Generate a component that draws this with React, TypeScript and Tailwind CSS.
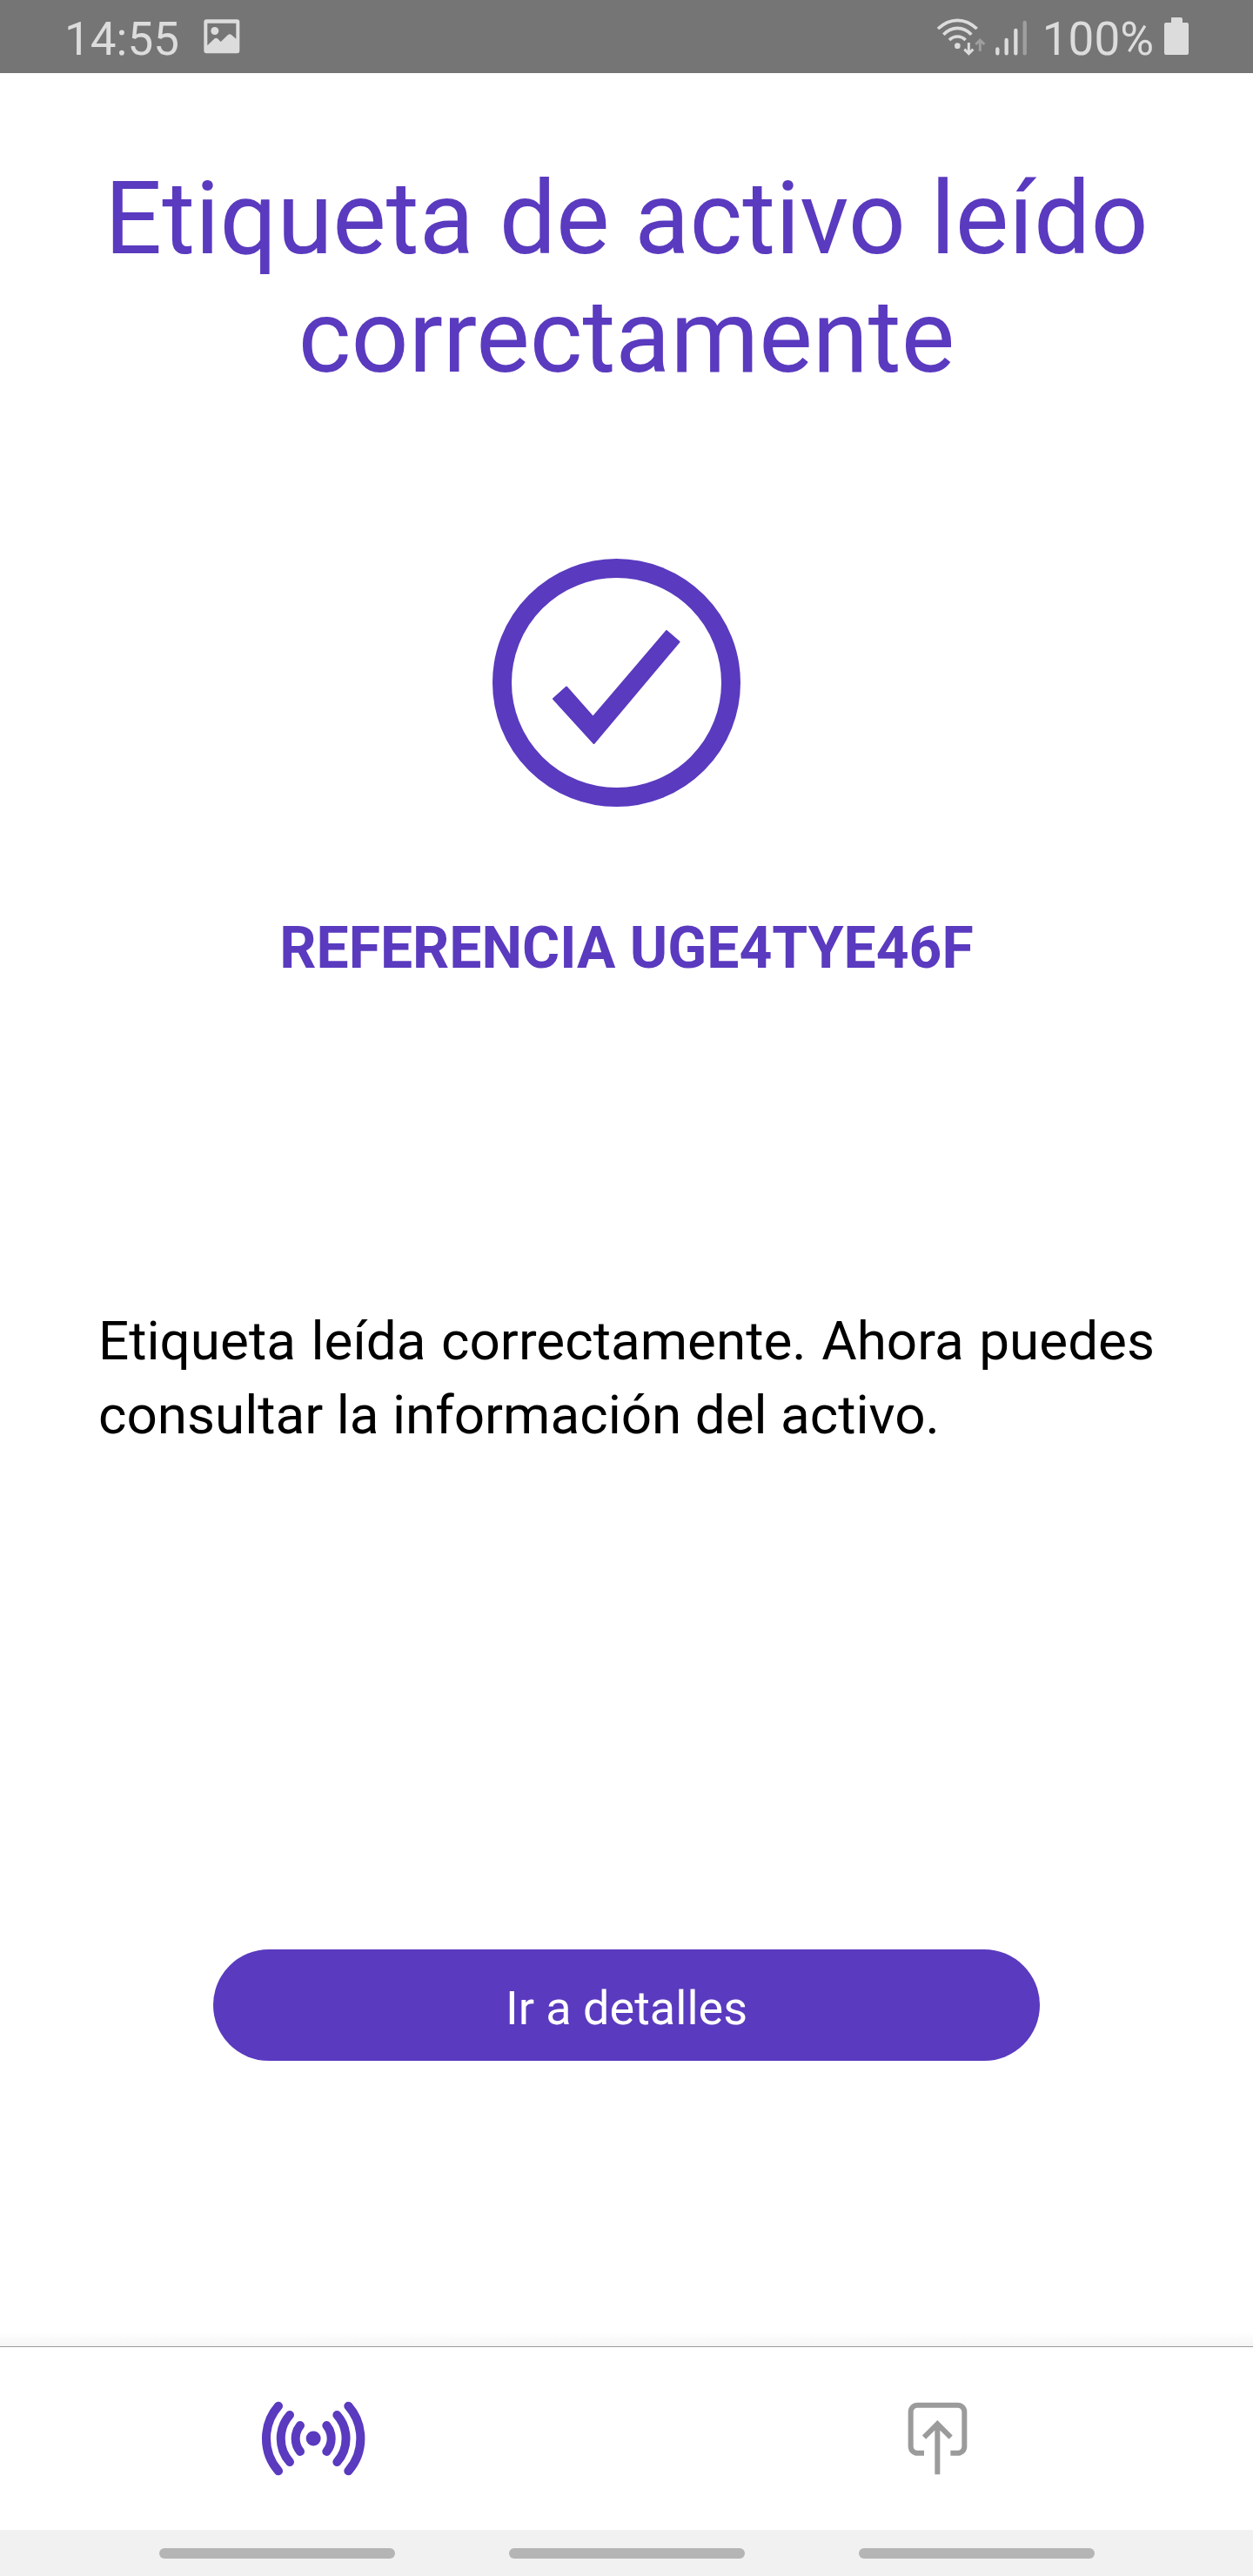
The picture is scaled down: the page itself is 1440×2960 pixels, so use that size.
import React from 'react';

function StatusBar() {
  return (
    <header className="flex h-[84px] items-center justify-between bg-[#757575] px-[74px] text-[53px] leading-[62px] text-[#dcdcdc]">
      <div className="flex items-center gap-7">
        <time className="pt-[5px]">14:55</time>
        <svg width="42" height="40" viewBox="581 69 126 120" fill="currentColor" aria-label="Imagen">
          <path
            fillRule="evenodd"
            d="M591 70h105a9 9 0 0 1 9 9v99a9 9 0 0 1-9 9H591a9 9 0 0 1-9-9V79a9 9 0 0 1 9-9zM594 83v77l25-24q5-4 10 0l11 11 25-24q6-5 12 0l16 14V83z"
          />
          <circle cx="619.500" cy="109.500" r="13.500" />
        </svg>
      </div>
      <div className="flex items-center">
        <svg width="105" height="45" viewBox="105 60 315 135" fill="none" stroke="currentColor" aria-label="Wi-Fi y cobertura">
          <g strokeWidth="11">
            <path d="M111 99Q142 70 178 70T245 99" />
            <path d="M130 119Q151 97 178 97T226 119" />
            <path d="M150 138Q162 126 178 126T206 138" />
          </g>
          <circle cx="178" cy="158" r="10" fill="currentColor" stroke="none" />
          <path d="M217 147v38M202 170l15 15 15-15" strokeWidth="9" />
          <path d="M256 176v-38M241 153l15-15 15 15" strokeWidth="9" stroke="#9f9f9f" />
          <g strokeWidth="13" strokeLinecap="round">
            <path d="M316 169v15M347 138v46M379 105v79" />
            <path d="M410 78v106" stroke="#9f9f9f" />
          </g>
        </svg>
        <span className="ml-[17px] pt-[5px]">100%</span>
        <svg className="ml-3" width="28" height="44" viewBox="0 0 28 44" fill="currentColor" aria-label="Batería">
          <path d="M9 0h10a2 2 0 0 1 2 2v4h5a2 2 0 0 1 2 2v33a2 2 0 0 1-2 2H2a2 2 0 0 1-2-2V8a2 2 0 0 1 2-2h6V1a1 1 0 0 1 1-1z" />
        </svg>
      </div>
    </header>
  );
}

function CheckIcon() {
  return (
    <svg className="mt-[187px] mr-[22px]" width="286" height="286" viewBox="0 0 286 286" aria-hidden="true">
      <circle cx="142.500" cy="142.500" r="131.500" fill="none" stroke="currentColor" strokeWidth="22" />
      <path
        d="M70 161l15-13.500L115.500 182 200 83l14.500 12.500L116.500 212z"
        fill="currentColor"
        stroke="currentColor"
        strokeWidth="2"
        strokeLinejoin="round"
      />
    </svg>
  );
}

function AntennaIcon() {
  return (
    <svg width="120" height="86" viewBox="61 238 360 258" fill="none" stroke="currentColor" strokeWidth="30" strokeLinecap="round" aria-hidden="true">
      <path d="M121 255A170 170 0 0 0 121 479M160 286A122 122 0 0 0 160 448M196 322A71 71 0 0 0 196 412" />
      <path d="M362 255A170 170 0 0 1 362 479M323 286A122 122 0 0 1 323 448M287 322A71 71 0 0 1 287 412" />
      <circle cx="241.500" cy="367" r="25.500" fill="currentColor" stroke="none" />
    </svg>
  );
}

function UploadIcon() {
  return (
    <svg width="75" height="84" viewBox="98 116 225 252" fill="none" stroke="currentColor" strokeWidth="18" aria-hidden="true">
      <path d="M155 292.500H132a23 23 0 0 1-23-23V150a23 23 0 0 1 23-23h139a23 23 0 0 1 23 23v119.500a23 23 0 0 1-23 23h-25" />
      <path d="M201 366V192M155 238l46-46 46 46" />
    </svg>
  );
}

export default function App() {
  return (
    <div className="flex min-h-screen flex-col bg-white font-['Roboto',sans-serif]">
      <StatusBar />
      <main className="flex flex-1 flex-col items-center px-[113px] text-[#5a3abf]">
        <h1 className="mt-[99px] text-center text-[116px] leading-[136px]">Etiqueta de activo leído correctamente</h1>
        <CheckIcon />
        <p className="mt-[120px] text-[66px] leading-[84px] font-bold">REFERENCIA UGE4TYE46F</p>
        <p className="mt-[366px] w-full text-justify text-[62px] leading-[85px] text-black">
          Etiqueta leída correctamente. Ahora puedes consultar la información del activo.
        </p>
        <button type="button" className="mt-[572px] h-[128px] w-full max-w-[950px] rounded-full bg-[#5a3abf] pt-[6px] text-[54px] text-white">
          Ir a detalles
        </button>
      </main>
      <div className="h-4 bg-linear-to-b from-white to-[#f5f5f5]" />
      <nav className="grid h-[211px] grid-cols-2 border-t border-[#9a9a9a]">
        <button type="button" aria-label="Leer etiqueta" className="flex items-center justify-center text-[#5a3abf]">
          <AntennaIcon />
        </button>
        <button type="button" aria-label="Enviar" className="flex items-center justify-center text-[#9b9b9b]">
          <UploadIcon />
        </button>
      </nav>
      <footer className="flex h-[53px] items-center justify-center gap-[131px] bg-[#f1f1f1]">
        <span className="h-3 w-[271px] rounded-full bg-[#b5b5b5]" />
        <span className="h-3 w-[271px] rounded-full bg-[#b5b5b5]" />
        <span className="h-3 w-[271px] rounded-full bg-[#b5b5b5]" />
      </footer>
    </div>
  );
}
